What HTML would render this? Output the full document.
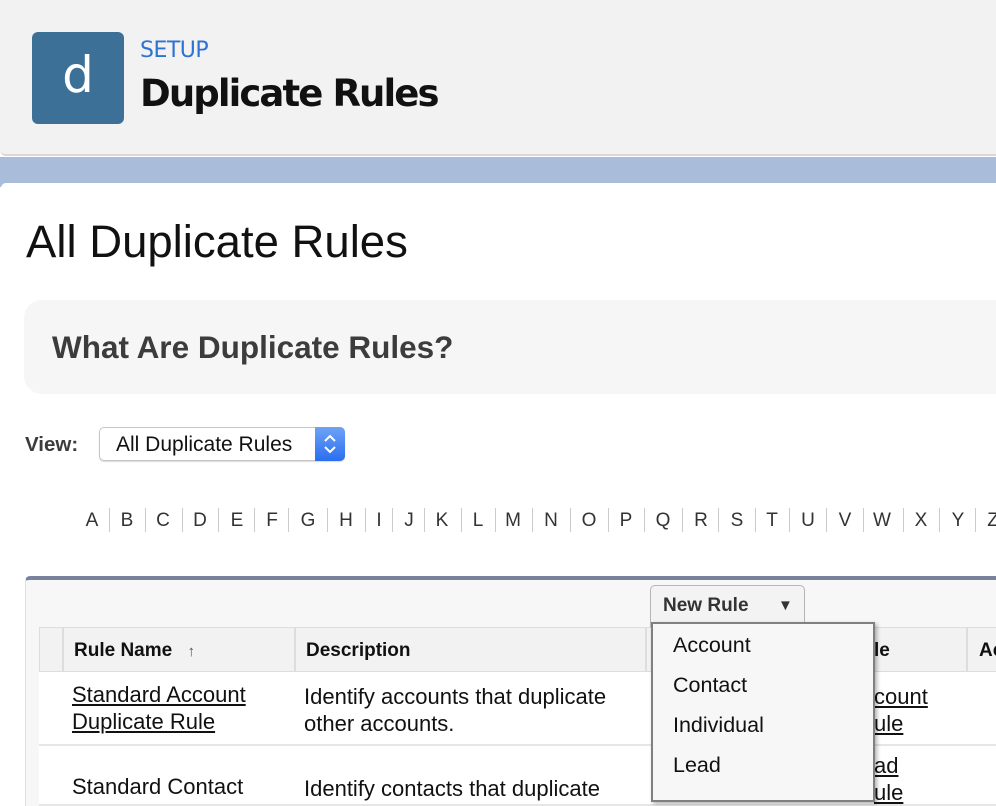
<!DOCTYPE html>
<html><head><meta charset="utf-8"><style>
*{margin:0;padding:0;box-sizing:border-box}
body{width:996px;height:790px;overflow:hidden;background:#fff;font-family:"Liberation Sans",Arial,sans-serif;position:relative}
.hdr{position:absolute;left:0;top:0;width:1000px;height:156px;background:#f2f2f2;border-bottom:2px solid #d8d8d8;border-radius:0 0 0 6px}
.icon{position:absolute;left:32px;top:32px;width:92px;height:92px;background:#3d7097;border-radius:6px;color:#fff;font-size:50px;text-align:center;line-height:86px;font-family:"DejaVu Sans",sans-serif}
.setup{position:absolute;left:140px;top:38px;color:#2e72d2;font-size:22px;font-family:"DejaVu Sans",sans-serif;letter-spacing:-0.5px}
.h1{position:absolute;left:140px;top:72px;font-size:37px;font-weight:bold;color:#111;font-family:"DejaVu Sans",sans-serif;letter-spacing:-1.9px}
.strip{position:absolute;left:0;top:157px;width:996px;height:30px;background:#a9bcd9}
.card{position:absolute;left:1px;top:183px;width:1000px;height:620px;background:#fff;border-radius:5px 0 0 0}
.t{position:absolute;left:26px;top:216px;font-size:45.5px;color:#111}
.box{position:absolute;left:24px;top:300px;width:990px;height:94px;background:#f6f6f6;border-radius:18px}
.box b{position:absolute;left:28px;top:29px;font-size:31.5px;color:#3c3c3c}
.vl{position:absolute;left:25px;top:433px;font-size:20.5px;font-weight:bold;color:#3c3c3c}
.sel{position:absolute;left:99px;top:427px;width:246px;height:34px;border:1px solid #c6c6c6;border-radius:5px;background:#fff;font-size:21px;line-height:33px;padding-left:16px;color:#111;box-shadow:0 1px 1px rgba(0,0,0,.15)}
.sel i{position:absolute;right:-1px;top:-1px;width:30px;height:34px;background:linear-gradient(#6ea3f5,#2a6ef0);border-radius:0 5px 5px 0}
.lt{position:absolute;top:510px;font-size:19px;color:#333;transform:translateX(-50%)}
.sp{position:absolute;top:508px;width:1px;height:24px;background:#ccc}
.tbl{position:absolute;left:25px;top:576px;width:980px;height:230px;background:#f7f7f7;border-top:4px solid #78829a;border-radius:5px 0 0 0;border-left:1px solid #e0e0e0}
.hrow{position:absolute;left:39px;top:627px;width:970px;height:45px;background:#f2f2f2;border:1px solid #ddd}
.vd{position:absolute;top:627px;width:2px;height:45px;background:#ddd}
.th{position:absolute;top:640px;font-size:19px;font-weight:bold;color:#111}
.row{position:absolute;left:39px;width:970px;background:#fff;border-bottom:2px solid #e6e6e6}
.td{position:absolute;font-size:22px;line-height:27px;color:#111}
.td u{text-decoration:underline}
.btn{position:absolute;left:650px;top:585px;width:155px;height:42px;border:1px solid #b5b5b5;border-radius:5px 5px 0 0;background:#f3f3f3;font-size:19px;font-weight:bold;color:#333;padding:9px 0 0 12px}
.btn span{position:absolute;left:127px;top:11px;font-size:15px;color:#333}
.dd{position:absolute;left:651px;top:622px;width:224px;height:180px;background:#f7f7f7;border:2px solid #808080;box-shadow:2px 2px 4px rgba(0,0,0,.3)}
.dd div{position:absolute;left:20px;font-size:21.5px;color:#111}
</style></head><body>
<div class="hdr"><div class="icon">d</div><div class="setup">SETUP</div><div class="h1">Duplicate Rules</div></div>
<div class="strip"></div>
<div class="card"></div>
<div class="t">All Duplicate Rules</div>
<div class="box"><b>What Are Duplicate Rules?</b></div>
<div class="vl">View:</div>
<div class="sel">All Duplicate Rules<i><svg width="30" height="34" viewBox="0 0 30 34"><path d="M10 14l5-5 5 5M10 20l5 5 5-5" stroke="#fff" stroke-width="2" fill="none"/></svg></i></div>

<div class="lt" style="left:92px">A</div><div class="sp" style="left:109px"></div>
<div class="lt" style="left:127px">B</div><div class="sp" style="left:145px"></div>
<div class="lt" style="left:163px">C</div><div class="sp" style="left:182px"></div>
<div class="lt" style="left:200px">D</div><div class="sp" style="left:218px"></div>
<div class="lt" style="left:237px">E</div><div class="sp" style="left:254px"></div>
<div class="lt" style="left:272px">F</div><div class="sp" style="left:288px"></div>
<div class="lt" style="left:308px">G</div><div class="sp" style="left:327px"></div>
<div class="lt" style="left:346px">H</div><div class="sp" style="left:365px"></div>
<div class="lt" style="left:379px">I</div><div class="sp" style="left:392px"></div>
<div class="lt" style="left:409px">J</div><div class="sp" style="left:424px"></div>
<div class="lt" style="left:442px">K</div><div class="sp" style="left:461px"></div>
<div class="lt" style="left:478px">L</div><div class="sp" style="left:495px"></div>
<div class="lt" style="left:513px">M</div><div class="sp" style="left:532px"></div>
<div class="lt" style="left:551px">N</div><div class="sp" style="left:570px"></div>
<div class="lt" style="left:589px">O</div><div class="sp" style="left:608px"></div>
<div class="lt" style="left:626px">P</div><div class="sp" style="left:644px"></div>
<div class="lt" style="left:663px">Q</div><div class="sp" style="left:682px"></div>
<div class="lt" style="left:701px">R</div><div class="sp" style="left:718px"></div>
<div class="lt" style="left:737px">S</div><div class="sp" style="left:755px"></div>
<div class="lt" style="left:772px">T</div><div class="sp" style="left:789px"></div>
<div class="lt" style="left:808px">U</div><div class="sp" style="left:826px"></div>
<div class="lt" style="left:845px">V</div><div class="sp" style="left:863px"></div>
<div class="lt" style="left:882px">W</div><div class="sp" style="left:903px"></div>
<div class="lt" style="left:921px">X</div><div class="sp" style="left:939px"></div>
<div class="lt" style="left:958px">Y</div><div class="sp" style="left:975px"></div>
<div class="lt" style="left:993px">Z</div>

<div class="tbl"></div>
<div class="hrow"></div>
<div class="vd" style="left:62px"></div><div class="vd" style="left:294px"></div><div class="vd" style="left:645px"></div><div class="vd" style="left:966px"></div>
<div class="th" style="left:74px">Rule Name <span style="font-size:15px;color:#555;margin-left:10px">&#8593;</span></div>
<div class="th" style="left:306px">Description</div>
<div class="th" style="left:874px">le</div>
<div class="th" style="left:979px">Ac</div>
<div class="row" style="top:672px;height:74px"></div>
<div class="row" style="top:746px;height:60px"></div>
<div class="td" style="left:72px;top:681px"><u>Standard Account</u><br><u>Duplicate Rule</u></div>
<div class="td" style="left:304px;top:683px">Identify accounts that duplicate<br>other accounts.</div>
<div class="td" style="left:874px;top:683px"><u>count</u><br><u>ule</u></div>
<div class="td" style="left:72px;top:773px">Standard Contact</div>
<div class="td" style="left:304px;top:775px">Identify contacts that duplicate</div>
<div class="td" style="left:874px;top:752px"><u>ad</u><br><u>ule</u></div>
<div class="btn">New Rule<span>&#9660;</span></div>
<div class="dd">
<div style="top:9px">Account</div><div style="top:49px">Contact</div><div style="top:89px">Individual</div><div style="top:129px">Lead</div>
</div>
</body></html>
